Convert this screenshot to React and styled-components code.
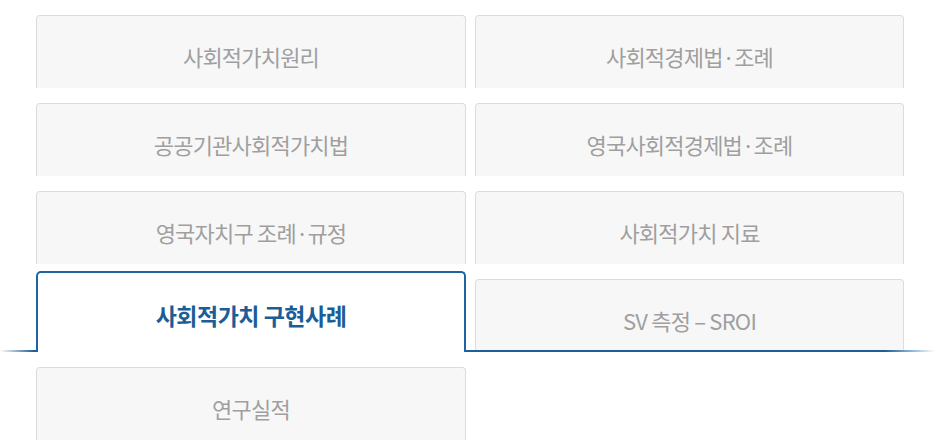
import React from "react";
import styled, { createGlobalStyle, css } from "styled-components";

const GlobalStyle = createGlobalStyle`
    html, body {
        margin: 0;
        padding: 0;
        background: #fff;
    }
    body {
        font-family: "Noto Sans CJK KR", "Noto Sans", sans-serif;
    }
`;

const Page = styled.div`
    width: 941px;
    height: 448px;
    overflow: hidden;
    padding: 15px 0 0 36px;
    box-sizing: border-box;
`;

const TabList = styled.ul`
    list-style: none;
    margin: 0;
    padding: 0;
    display: flex;
    flex-direction: column;
    gap: 15px;
`;

const TabRow = styled.li`
    position: relative;
    display: grid;
    grid-template-columns: 430px 429px;
    column-gap: 9px;
    align-items: end;
    height: 73px;

    ${({ $current }) =>
        $current &&
        css`
            &::before {
                content: "";
                position: absolute;
                left: -36px;
                width: 941px;
                bottom: 0;
                height: 2px;
                background: linear-gradient(
                    to right,
                    rgba(29, 95, 150, 0) 0px,
                    #1d5f96 34px,
                    #1d5f96 885px,
                    rgba(90, 150, 200, 0.6) 915px,
                    rgba(120, 170, 215, 0) 935px
                );
            }
        `}
`;

const Tab = styled.a`
    position: relative;
    display: flex;
    justify-content: center;
    align-items: flex-start;
    box-sizing: border-box;
    height: 73px;
    padding-top: 26px;
    border: 1px solid #dcdcdc;
    border-bottom: none;
    border-radius: 4px 4px 0 0;
    background: #f7f7f7;
    color: #9f9f9f;
    font-size: 22px;
    font-weight: 400;
    line-height: 28px;
    letter-spacing: -0.8px;
    text-decoration: none;
    white-space: pre;
    cursor: pointer;

    ${({ $inCurrentRow }) =>
        $inCurrentRow &&
        css`
            height: 71px;
            margin-bottom: 2px;
        `}

    ${({ $active }) =>
        $active &&
        css`
            z-index: 1;
            height: 81px;
            margin: -8px 0 0;
            padding-top: 28px;
            border: 2px solid #1d65a2;
            border-bottom: none;
            border-radius: 5px 5px 0 0;
            background: #fff;
            color: #1b5d96;
            font-size: 23px;
            font-weight: 700;
            letter-spacing: -0.5px;
        `}
`;

const tabs = [
    "사회적가치원리",
    "사회적경제법·조례",
    "공공기관사회적가치법",
    "영국사회적경제법·조례",
    "영국자치구 조례·규정",
    "사회적가치 지료",
    "사회적가치 구현사례",
    "SV 측정 – SROI",
    "연구실적",
];

const activeIndex = 6;

export default function App() {
    const rows = [];
    for (let i = 0; i < tabs.length; i += 2) {
        rows.push(tabs.slice(i, i + 2).map((label, j) => ({ label, idx: i + j })));
    }

    return (
        <>
            <GlobalStyle />
            <Page>
                <TabList>
                    {rows.map((row, r) => {
                        const current = row.some((t) => t.idx === activeIndex);
                        return (
                            <TabRow key={r} $current={current}>
                                {row.map((t) => (
                                    <Tab
                                        key={t.idx}
                                        $active={t.idx === activeIndex}
                                        $inCurrentRow={current}
                                    >
                                        {t.label}
                                    </Tab>
                                ))}
                            </TabRow>
                        );
                    })}
                </TabList>
            </Page>
        </>
    );
}
